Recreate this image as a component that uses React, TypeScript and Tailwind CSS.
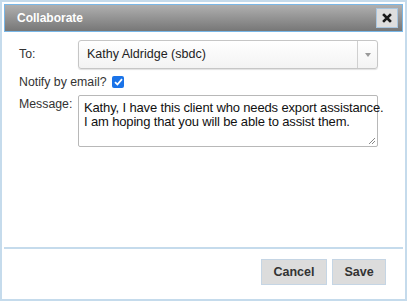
import React from 'react';

const font = { fontFamily: '"Liberation Sans", Arial, sans-serif' };

const CloseIcon: React.FC = () => (
  <svg width="10" height="10" viewBox="0 0 10 10">
    <path d="M2 2 L8 8 M8 2 L2 8" stroke="#1a1a1a" strokeWidth="2.6" strokeLinecap="square" />
  </svg>
);

const App: React.FC = () => {
  return (
    <div className="w-[409px] h-[302px] bg-white" style={font}>
      <div className="w-[407px] h-[301px] border-2 border-[#c5dbec] p-[2px] flex flex-col bg-white">
        <div className="h-[28px] shrink-0 border border-[#79b7e7] bg-gradient-to-b from-[#b0b0b0] to-[#777777] flex items-center justify-between pl-[12px] pr-[4px]">
          <span className="text-white font-bold text-[12px]">Collaborate</span>
          <button className="w-[22px] h-[20px] bg-[#dedede] border border-[#a9c6e0] flex items-center justify-center">
            <CloseIcon />
          </button>
        </div>
        <div className="flex-1 flex flex-col pl-[15px] pt-[8px] text-[12.3px] text-[#333]">
          <div className="flex items-center h-[29px]">
            <span className="w-[59px]">To:</span>
            <div className="w-[300px] h-[29px] border border-[#c6c6c6] rounded-[3px] bg-gradient-to-b from-white to-[#f3f3f3] flex items-center shadow-[0_1px_1px_rgba(0,0,0,0.12)]">
              <span className="flex-1 pl-[8px] text-[12.5px] text-[#222]">Kathy Aldridge (sbdc)</span>
              <div className="w-[20px] h-full border-l border-[#d0d0d0] flex items-center justify-center">
                <svg width="6" height="4" viewBox="0 0 6 4">
                  <path d="M0 0 L6 0 L3 4 Z" fill="#999" />
                </svg>
              </div>
            </div>
          </div>
          <div className="flex items-center mt-[5px] h-[16px]">
            <span>Notify by email?</span>
            <span className="ml-[6px] w-[12px] h-[12px] rounded-[2px] bg-[#1a73e8] flex items-center justify-center">
              <svg width="9" height="8" viewBox="0 0 9 8">
                <path d="M1 4.2 L3.4 6.5 L8 1.2" stroke="white" strokeWidth="1.8" fill="none" />
              </svg>
            </span>
          </div>
          <div className="flex mt-[5px]">
            <span className="w-[59px]">Message:</span>
            <div className="relative w-[300px] h-[52px] border border-[#b8b8b8] rounded-[2px] bg-white pl-[5px] pt-[5px] text-[13px] tracking-[-0.15px] leading-[14px] text-[#111] whitespace-nowrap">
              <div>Kathy, I have this client who needs export assistance.</div>
              <div>I am hoping that you will be able to assist them.</div>
              <svg className="absolute right-[1px] bottom-[1px]" width="8" height="8" viewBox="0 0 8 8">
                <path d="M7 1 L1 7 M7 4 L4 7" stroke="#888" strokeWidth="1" />
              </svg>
            </div>
          </div>
        </div>
        <div className="h-[2px] bg-[#c5dbec] shrink-0" />
        <div className="h-[48px] shrink-0 flex justify-end items-start pt-[10px] pr-[17px] gap-[5px]">
          <button className="w-[66px] h-[26px] bg-[#dcdcdc] border border-[#c5d5e4] text-[12.5px] font-bold text-[#333]">Cancel</button>
          <button className="w-[54px] h-[26px] bg-[#dcdcdc] border border-[#c5d5e4] text-[12.5px] font-bold text-[#333]">Save</button>
        </div>
      </div>
    </div>
  );
};

export default App;
